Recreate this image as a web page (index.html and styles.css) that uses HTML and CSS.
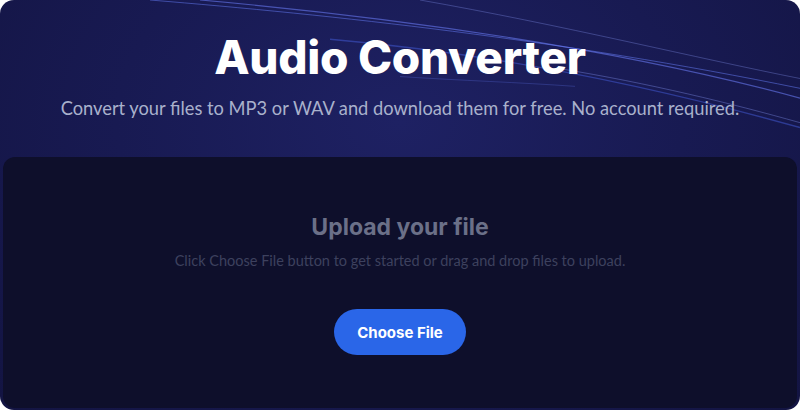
FILE: index.html
```html
<!DOCTYPE html>
<html lang="en">

<head>
    <meta charset="UTF-8" />
    <meta name="viewport" content="width=device-width, initial-scale=1.0" />
    <title>Audio Converter</title>
    <link rel="stylesheet" href="styles.css">
</head>

<body>
    <div class="frame">
        <!-- hero -->
        <div class="hero">
            <svg class="streaks" viewBox="0 0 800 160" preserveAspectRatio="none">
                <path d="M150 0 C330 15 560 40 800 90" stroke="#5b6fe0" stroke-width="1" fill="none" opacity="0.6" />
                <path d="M200 0 C400 18 620 50 800 100" stroke="#6f82ff" stroke-width="1.2" fill="none" opacity="0.55" />
                <path d="M420 0 C560 25 700 60 800 80" stroke="#8fa0ff" stroke-width="0.8" fill="none" opacity="0.4" />
                <path d="M330 40 C500 55 660 90 800 130" stroke="#4a63e8" stroke-width="1.4" fill="none" opacity="0.45" />
                <path d="M560 70 C650 85 730 105 800 125" stroke="#8fa0ff" stroke-width="0.8" fill="none" opacity="0.45" />
                <path d="M400 78 C460 82 520 84 575 88" stroke="#5b6fe0" stroke-width="1" fill="none" opacity="0.3" />
            </svg>
            <h1 class="title">Audio Converter</h1>
            <p class="subtitle">Convert your files to MP3 or WAV and download them for free. No account required.</p>
        </div>

        <!-- upload card -->
        <div class="card">
            <h2 class="card-title">Upload your file</h2>
            <p class="card-text">Click Choose File button to get started or drag and drop files to upload.</p>
            <button class="choose-btn">Choose File</button>
        </div>
    </div>
</body>

</html>
```

FILE: styles.css
```css
/* page */
body {
    margin: 0;
    padding: 0;
    background: #ffffff;
    font-family: "Open Sans", Lato, sans-serif;
}

.frame {
    width: 800px;
    height: 410px;
    border-radius: 14px;
    overflow: hidden;
    background: radial-gradient(ellipse at 50% 30%, #1e2163 0%, #181a52 50%, #131442 100%);
    display: flex;
    flex-direction: column;
    box-sizing: border-box;
    padding: 0 3px 2px;
}

/* hero */
.hero {
    position: relative;
    height: 157px;
    text-align: center;
}

.streaks {
    position: absolute;
    top: 0;
    left: -3px;
    width: 800px;
    height: 157px;
}

.title {
    position: relative;
    margin: 0;
    padding-top: 28px;
    font-family: Inter, sans-serif;
    font-weight: 800;
    font-size: 46px;
    line-height: 58px;
    letter-spacing: -0.3px;
    color: #ffffff;
}

.subtitle {
    position: relative;
    margin: 10px 0 0;
    font-family: Lato, sans-serif;
    font-size: 18.3px;
    line-height: 24px;
    color: #a9b1cc;
}

/* card */
.card {
    flex: 1;
    background: #0e0f2b;
    border-radius: 12px;
    display: flex;
    flex-direction: column;
    align-items: center;
    padding-top: 54px;
}

.card-title {
    margin: 0;
    font-family: Inter, sans-serif;
    font-weight: 700;
    font-size: 23px;
    line-height: 32px;
    color: #6b7088;
}

.card-text {
    margin: 9px 0 0;
    font-family: Lato, sans-serif;
    font-size: 14.5px;
    line-height: 18px;
    color: #3d415e;
}

.choose-btn {
    margin-top: 39px;
    width: 132px;
    height: 46px;
    border: none;
    border-radius: 23px;
    background: #2a66e8;
    color: #ffffff;
    font-family: Inter, sans-serif;
    font-weight: 700;
    font-size: 15px;
    cursor: pointer;
}
```
